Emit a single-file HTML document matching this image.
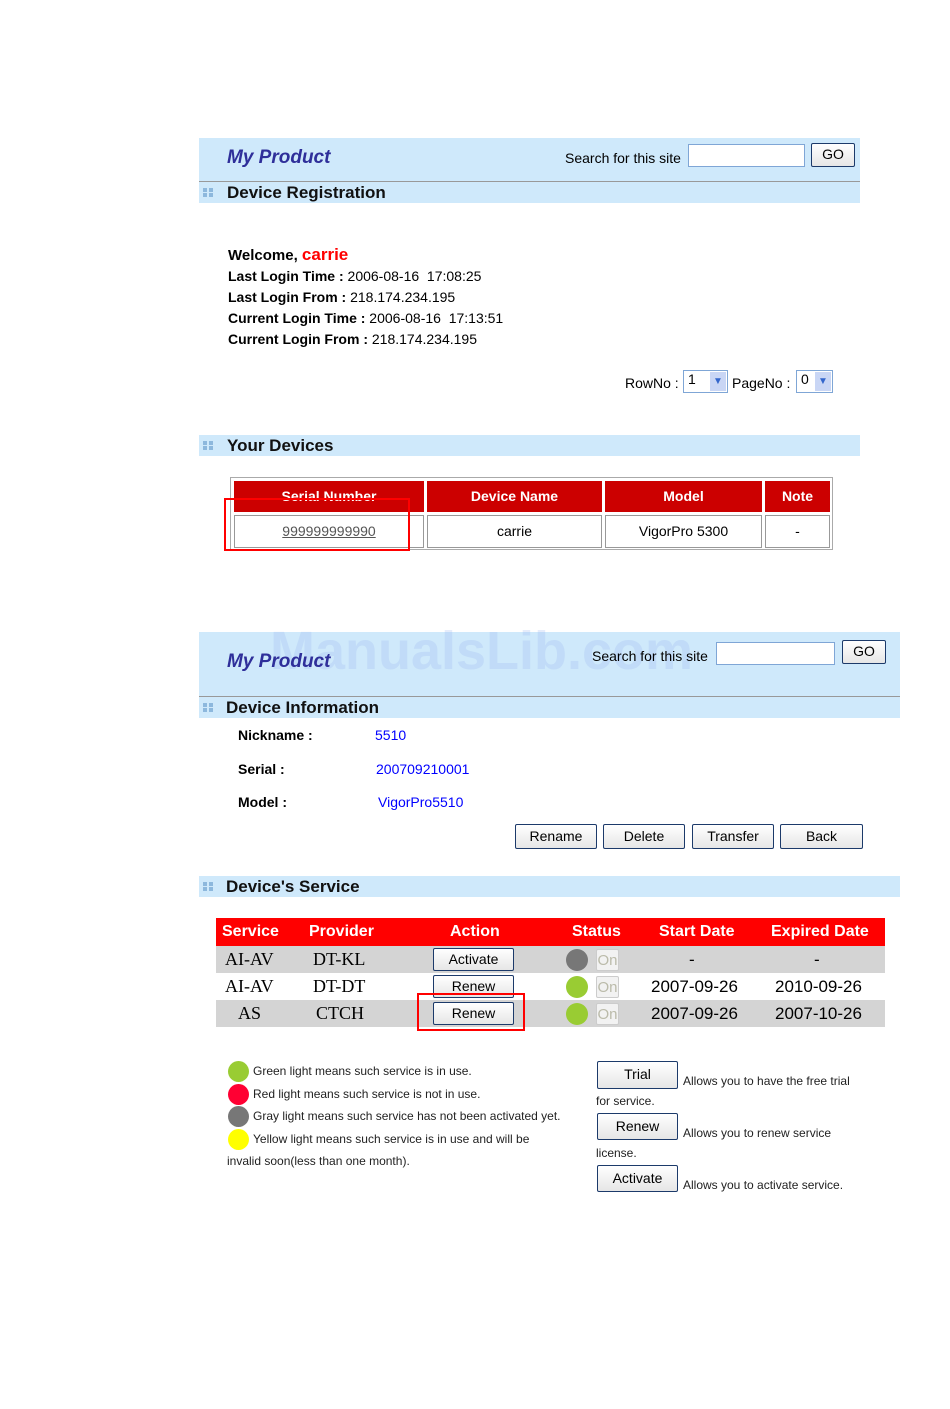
<!DOCTYPE html>
<html><head><style>
body{margin:0;width:950px;height:1409px;background:#fff;position:relative;font-family:"Liberation Sans",sans-serif;overflow:hidden}
.a{position:absolute;white-space:nowrap}
.band{position:absolute;background:#cfe9fb}
.bar{position:absolute;background:#cfe9fb;font-size:17px;font-weight:bold;color:#111;line-height:21px}
.ic{position:absolute;left:4px;top:6px;width:10px;height:9px;background:
linear-gradient(#cfe9fb,#cfe9fb) 4px 0/2px 9px no-repeat,linear-gradient(#cfe9fb,#cfe9fb) 0 4px/10px 1px no-repeat,#8db8dd}
.btn{position:absolute;border:1px solid #1c3a6a;border-radius:2px;background:linear-gradient(#fff,#e6e6e6);font-size:14px;text-align:center;box-sizing:border-box;color:#000}
.inp{position:absolute;border:1px solid #7fa6d6;background:#fff;box-sizing:border-box}
.b{font-weight:bold}
.c{position:absolute;border-radius:50%}
.on{position:absolute;width:23px;height:22px;border:1px solid #ccc;background:#f2f2f2;color:#bba;font-size:15px;text-align:center;line-height:21px;box-sizing:border-box;border-radius:2px}
.th{position:absolute;background:#c00;color:#fff;font-weight:bold;font-size:14px;text-align:center;line-height:31px;height:31px;top:481px}
.td{position:absolute;border:1px solid #999;font-size:14px;text-align:center;line-height:31px;height:33px;top:515px;box-sizing:border-box}
.s{font-size:16px;color:#fff;font-weight:bold;top:923px}
.sr{font-family:"Liberation Serif",serif;font-size:18px}
.d{font-size:17px;font-family:"Liberation Sans Narrow","Liberation Sans",sans-serif}
.sm{font-size:12px;color:#222}
</style></head><body>
<div class="band" style="left:199px;top:138px;width:661px;height:43px"></div>
<div class="a" style="left:199px;top:181px;width:661px;height:1px;background:#999"></div>
<div class="a b" style="left:227px;top:147px;font-size:19px;font-style:italic;color:#2f2f9a">My Product</div>
<div class="a" style="left:565px;top:150px;font-size:14px">Search for this site</div>
<div class="inp" style="left:688px;top:144px;width:117px;height:23px"></div>
<div class="btn" style="left:811px;top:143px;width:44px;height:24px;line-height:21px">GO</div>
<div class="bar" style="left:199px;top:182px;width:661px;height:21px"><div class="ic"></div><span class="a" style="left:28px;top:0">Device Registration</span></div>

<div class="a" style="left:228px;top:244px;font-size:15px;line-height:21px">
<b>Welcome, </b><b style="color:#f00;font-size:17px">carrie</b><br>
<span style="font-size:14px"><b>Last Login Time :</b> 2006-08-16&nbsp; 17:08:25<br><b>Last Login From :</b> 218.174.234.195<br><b>Current Login Time :</b> 2006-08-16&nbsp; 17:13:51<br><b>Current Login From :</b> 218.174.234.195</span></div>
<div class="a" style="left:625px;top:375px;font-size:14px">RowNo :</div>
<div class="inp" style="left:683px;top:370px;width:45px;height:23px;font-size:14px;padding-left:4px">1<span style="position:absolute;right:1px;top:1px;width:16px;height:19px;background:#c9d6f5;color:#36c;font-size:10px;text-align:center;line-height:19px">&#9660;</span></div>
<div class="a" style="left:732px;top:375px;font-size:14px">PageNo :</div>
<div class="inp" style="left:796px;top:370px;width:37px;height:23px;font-size:14px;padding-left:4px">0<span style="position:absolute;right:1px;top:1px;width:16px;height:19px;background:#c9d6f5;color:#36c;font-size:10px;text-align:center;line-height:19px">&#9660;</span></div>

<div class="bar" style="left:199px;top:435px;width:661px;height:21px"><div class="ic"></div><span class="a" style="left:28px;top:0">Your Devices</span></div>
<div class="a" style="left:230px;top:477px;width:601px;height:71px;border:1px solid #aaa"></div>
<div class="th" style="left:234px;width:190px">Serial Number</div>
<div class="th" style="left:427px;width:175px">Device Name</div>
<div class="th" style="left:605px;width:157px">Model</div>
<div class="th" style="left:765px;width:65px">Note</div>
<div class="td" style="left:234px;width:190px;color:#555;text-decoration:underline">999999999990</div>
<div class="td" style="left:427px;width:175px">carrie</div>
<div class="td" style="left:605px;width:157px">VigorPro 5300</div>
<div class="td" style="left:765px;width:65px">-</div>
<div class="a" style="left:224px;top:498px;width:182px;height:49px;border:2px solid #f00"></div>

<div class="band" style="left:199px;top:632px;width:701px;height:64px"></div>
<div class="a" style="left:199px;top:696px;width:701px;height:1px;background:#999"></div>
<div class="a" style="left:270px;top:620px;font-size:54px;font-weight:bold;color:rgba(150,180,240,.25)">ManualsLib.com</div>
<div class="a b" style="left:227px;top:651px;font-size:19px;font-style:italic;color:#2f2f9a">My Product</div>
<div class="a" style="left:592px;top:648px;font-size:14px">Search for this site</div>
<div class="inp" style="left:716px;top:642px;width:119px;height:23px"></div>
<div class="btn" style="left:842px;top:640px;width:44px;height:24px;line-height:21px">GO</div>
<div class="bar" style="left:199px;top:697px;width:701px;height:21px"><div class="ic"></div><span class="a" style="left:27px;top:0">Device Information</span></div>
<div class="a b" style="left:238px;top:727px;font-size:14px">Nickname :</div>
<div class="a b" style="left:238px;top:761px;font-size:14px">Serial :</div>
<div class="a b" style="left:238px;top:794px;font-size:14px">Model :</div>
<div class="a" style="left:375px;top:727px;font-size:14px;color:#00f">5510</div>
<div class="a" style="left:376px;top:761px;font-size:14px;color:#00f">200709210001</div>
<div class="a" style="left:378px;top:794px;font-size:14px;color:#00f">VigorPro5510</div>
<div class="btn" style="left:515px;top:824px;width:82px;height:25px;line-height:22px">Rename</div>
<div class="btn" style="left:603px;top:824px;width:82px;height:25px;line-height:22px">Delete</div>
<div class="btn" style="left:692px;top:824px;width:82px;height:25px;line-height:22px">Transfer</div>
<div class="btn" style="left:780px;top:824px;width:83px;height:25px;line-height:22px">Back</div>
<div class="bar" style="left:199px;top:876px;width:701px;height:21px"><div class="ic"></div><span class="a" style="left:27px;top:0">Device's Service</span></div>

<div class="a" style="left:216px;top:918px;width:669px;height:28px;background:#f00"></div>
<div class="a" style="left:216px;top:946px;width:669px;height:27px;background:#d4d4d4"></div>
<div class="a" style="left:216px;top:1000px;width:669px;height:27px;background:#d4d4d4"></div>
<div class="a s" style="left:222px">Service</div>
<div class="a s" style="left:309px">Provider</div>
<div class="a s" style="left:450px">Action</div>
<div class="a s" style="left:572px">Status</div>
<div class="a s" style="left:659px">Start Date</div>
<div class="a s" style="left:771px">Expired Date</div>
<div class="a sr" style="left:225px;top:949px">AI-AV</div><div class="a sr" style="left:313px;top:949px">DT-KL</div>
<div class="a sr" style="left:225px;top:976px">AI-AV</div><div class="a sr" style="left:313px;top:976px">DT-DT</div>
<div class="a sr" style="left:238px;top:1003px">AS</div><div class="a sr" style="left:316px;top:1003px">CTCH</div>
<div class="btn" style="left:433px;top:948px;width:81px;height:23px;line-height:21px">Activate</div>
<div class="btn" style="left:433px;top:975px;width:81px;height:23px;line-height:21px">Renew</div>
<div class="btn" style="left:433px;top:1002px;width:81px;height:23px;line-height:21px">Renew</div>
<div class="a" style="left:417px;top:993px;width:104px;height:34px;border:2px solid #f00"></div>
<div class="c" style="left:566px;top:949px;width:22px;height:22px;background:#777"></div>
<div class="c" style="left:566px;top:976px;width:22px;height:22px;background:#9c3"></div>
<div class="c" style="left:566px;top:1003px;width:22px;height:22px;background:#9c3"></div>
<div class="on" style="left:596px;top:949px">On</div>
<div class="on" style="left:596px;top:976px">On</div>
<div class="on" style="left:596px;top:1003px">On</div>
<div class="a d" style="left:689px;top:950px">-</div><div class="a d" style="left:814px;top:950px">-</div>
<div class="a d" style="left:651px;top:977px">2007-09-26</div><div class="a d" style="left:775px;top:977px">2010-09-26</div>
<div class="a d" style="left:651px;top:1004px">2007-09-26</div><div class="a d" style="left:775px;top:1004px">2007-10-26</div>

<div class="c" style="left:228px;top:1061px;width:21px;height:21px;background:#9c3"></div>
<div class="c" style="left:228px;top:1084px;width:21px;height:21px;background:#f03"></div>
<div class="c" style="left:228px;top:1106px;width:21px;height:21px;background:#777"></div>
<div class="c" style="left:228px;top:1129px;width:21px;height:21px;background:#ff0"></div>
<div class="a sm" style="left:253px;top:1064px">Green light means such service is in use.</div>
<div class="a sm" style="left:253px;top:1087px">Red light means such service is not in use.</div>
<div class="a sm" style="left:253px;top:1109px">Gray light means such service has not been activated yet.</div>
<div class="a sm" style="left:253px;top:1132px">Yellow light means such service is in use and will be</div>
<div class="a sm" style="left:227px;top:1154px">invalid soon(less than one month).</div>
<div class="btn" style="left:597px;top:1061px;width:81px;height:28px;line-height:25px">Trial</div>
<div class="btn" style="left:597px;top:1113px;width:81px;height:27px;line-height:24px">Renew</div>
<div class="btn" style="left:597px;top:1165px;width:81px;height:27px;line-height:24px">Activate</div>
<div class="a sm" style="left:683px;top:1074px">Allows you to have the free trial</div>
<div class="a sm" style="left:596px;top:1094px">for service.</div>
<div class="a sm" style="left:683px;top:1126px">Allows you to renew service</div>
<div class="a sm" style="left:596px;top:1146px">license.</div>
<div class="a sm" style="left:683px;top:1178px">Allows you to activate service.</div>
</body></html>
